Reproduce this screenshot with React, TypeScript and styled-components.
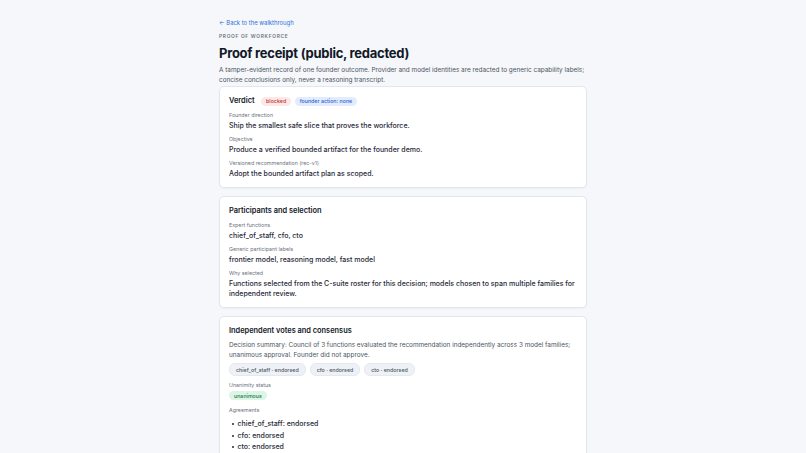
import styled, { createGlobalStyle } from 'styled-components';

const GlobalStyle = createGlobalStyle`
	html, body {
		margin: 0;
		padding: 0;
		background: #f5f7fa;
		font-family: Inter, "Noto Sans", "Liberation Sans", sans-serif;
		-webkit-font-smoothing: antialiased;
	}
`

const Page = styled.main`
	max-width: 368px;
	margin: 0 auto;
	padding: 18px 0 24px;
	display: flex;
	flex-direction: column;
`
const BackLink = styled.a`
	font-size: 5.9px;
	line-height: 9px;
	color: #2f6fdc;
	text-decoration: none;
	cursor: pointer;
`
const Eyebrow = styled.div`
	margin-top: 6px;
	font-size: 4.8px;
	line-height: 7px;
	font-weight: 600;
	letter-spacing: 0.15em;
	text-transform: uppercase;
	color: #6b7280;
`
const Title = styled.h1`
	margin: 4px 0 0;
	font-size: 13px;
	line-height: 18px;
	font-weight: 700;
	letter-spacing: -0.02em;
	color: #111827;
`
const Lead = styled.p`
	margin: 3px 0 0;
	font-size: 6.4px;
	line-height: 10px;
	color: #4b5563;
`
const Cards = styled.div`
	margin-top: 1px;
	display: flex;
	flex-direction: column;
	gap: 8px;
`
const Card = styled.section`
	background: #fff;
	border: 1px solid #e3e7ed;
	border-radius: 5px;
	box-shadow: 0 1px 2px rgba(15, 23, 42, 0.04);
	padding: 9px 9px 8px;
	display: flex;
	flex-direction: column;
`
const CardHead = styled.div`
	display: flex;
	align-items: center;
	gap: 3.5px;
	height: 10px;
	margin-bottom: 6px;
`
const CardTitle = styled.h2`
	margin: 0 3px 0 0;
	font-size: 7.4px;
	line-height: 10px;
	font-weight: 600;
	color: #111827;
`
const Badge = styled.span<{ tone: 'red' | 'blue' | 'green' | 'gray' }>`
	display: inline-flex;
	align-items: center;
	height: 9px;
	padding: 0 5px;
	border-radius: 5px;
	font-size: 5.3px;
	font-weight: 500;
	white-space: nowrap;
	color: ${({ tone }) => ({ red: '#c53030', blue: '#2b63d9', green: '#1d7a46', gray: '#4b5563' })[tone]};
	background: ${({ tone }) => ({ red: '#fde8e8', blue: '#e2ecfd', green: '#dcf5e6', gray: '#eef1f5' })[tone]};
`
const StatusBadge = styled(Badge)`
	margin-bottom: 2px;
`
const Fields = styled.div`
	display: flex;
	flex-direction: column;
	gap: 5px;
`
const Field = styled.div`
	display: flex;
	flex-direction: column;
	align-items: flex-start;
	gap: 2px;
`
const Label = styled.div`
	font-size: 5.3px;
	line-height: 7px;
	color: #6b7280;
`
const Value = styled.div`
	font-size: 7px;
	line-height: 10px;
	font-weight: 500;
	color: #1f2937;
`
const Summary = styled.p`
	margin: -1px 0 3px;
	font-size: 6.4px;
	line-height: 9.7px;
	color: #4b5563;
`
const Chips = styled.div`
	display: flex;
	gap: 4px;
	flex-wrap: wrap;
	margin-bottom: 6px;
`
const Chip = styled(Badge)`
	height: 11px;
	padding: 0 6px;
	border-radius: 6px;
	border: 0.5px solid #e5e9ef;
`
const List = styled.ul`
	margin: 3px 0 0;
	padding: 0;
	list-style: none;
	display: flex;
	flex-direction: column;
	gap: 1.5px;
`
const Item = styled.li`
	display: flex;
	align-items: center;
	gap: 4px;
	padding-left: 2.5px;
	font-size: 7px;
	line-height: 10px;
	font-weight: 500;
	color: #1f2937;
	&::before {
		content: '';
		width: 2px;
		height: 2px;
		border-radius: 50%;
		background: #1f2937;
	}
`

const votes = ['chief_of_staff', 'cfo', 'cto'];

export default function App() {
	return (
		<>
			<GlobalStyle />
			<Page>
				<BackLink>← Back to the walkthrough</BackLink>
				<Eyebrow>Proof of workforce</Eyebrow>
				<Title>Proof receipt (public, redacted)</Title>
				<Lead>
					A tamper-evident record of one founder outcome. Provider and model identities are redacted to generic capability labels; concise conclusions only, never a reasoning transcript.
				</Lead>
				<Cards>
					<Card>
						<CardHead>
							<CardTitle>Verdict</CardTitle>
							<Badge tone="red">blocked</Badge>
							<Badge tone="blue">founder action: none</Badge>
						</CardHead>
						<Fields>
							<Field>
								<Label>Founder direction</Label>
								<Value>Ship the smallest safe slice that proves the workforce.</Value>
							</Field>
							<Field>
								<Label>Objective</Label>
								<Value>Produce a verified bounded artifact for the founder demo.</Value>
							</Field>
							<Field>
								<Label>Versioned recommendation (rec-v1)</Label>
								<Value>Adopt the bounded artifact plan as scoped.</Value>
							</Field>
						</Fields>
					</Card>
					<Card>
						<CardHead>
							<CardTitle>Participants and selection</CardTitle>
						</CardHead>
						<Fields>
							<Field>
								<Label>Expert functions</Label>
								<Value>chief_of_staff, cfo, cto</Value>
							</Field>
							<Field>
								<Label>Generic participant labels</Label>
								<Value>frontier model, reasoning model, fast model</Value>
							</Field>
							<Field>
								<Label>Why selected</Label>
								<Value>Functions selected from the C-suite roster for this decision; models chosen to span multiple families for independent review.</Value>
							</Field>
						</Fields>
					</Card>
					<Card>
						<CardHead>
							<CardTitle>Independent votes and consensus</CardTitle>
						</CardHead>
						<Summary>
							Decision summary: Council of 3 functions evaluated the recommendation independently across 3 model families; unanimous approval. Founder did not approve.
						</Summary>
						<Chips>
							{votes.map((v) => (
								<Chip key={v} tone="gray">{v} · endorsed</Chip>
							))}
						</Chips>
						<Fields>
							<Field>
								<Label>Unanimity status</Label>
								<StatusBadge tone="green">unanimous</StatusBadge>
							</Field>
							<Field>
								<Label>Agreements</Label>
								<List>
									{votes.map((v) => (
										<Item key={v}>{v}: endorsed</Item>
									))}
								</List>
							</Field>
						</Fields>
					</Card>
				</Cards>
			</Page>
		</>
	);
}
